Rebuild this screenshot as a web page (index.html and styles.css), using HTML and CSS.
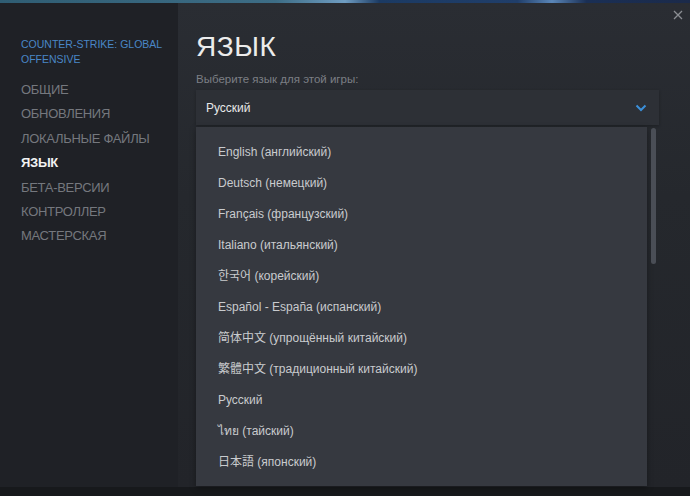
FILE: index.html
```html
<!DOCTYPE html>
<html lang="ru">
<head>
<meta charset="utf-8">
<title>Свойства — Язык</title>
<link rel="stylesheet" href="styles.css">
</head>
<body>
<div class="topline"></div>
<div class="window">
  <aside class="sidebar">
    <div class="game-title">COUNTER-STRIKE: GLOBAL OFFENSIVE</div>
    <nav class="menu">
      <div class="menu-item">ОБЩИЕ</div>
      <div class="menu-item">ОБНОВЛЕНИЯ</div>
      <div class="menu-item">ЛОКАЛЬНЫЕ ФАЙЛЫ</div>
      <div class="menu-item active">ЯЗЫК</div>
      <div class="menu-item">БЕТА-ВЕРСИИ</div>
      <div class="menu-item">КОНТРОЛЛЕР</div>
      <div class="menu-item">МАСТЕРСКАЯ</div>
    </nav>
  </aside>
  <main class="main">
    <div class="close">
      <svg width="10" height="10" viewBox="0 0 10 10"><path d="M1 1 L9 9 M9 1 L1 9" stroke="#8b8e93" stroke-width="1.3" fill="none"/></svg>
    </div>
    <h1 class="title">ЯЗЫК</h1>
    <div class="subtitle">Выберите язык для этой игры:</div>
    <div class="select">
      <span class="select-value">Русский</span>
      <svg class="chevron" width="12" height="8" viewBox="0 0 12 8"><path d="M1.5 1.5 L6 6 L10.5 1.5" stroke="#3b8fd9" stroke-width="2" fill="none"/></svg>
    </div>
    <div class="dropdown">
      <div class="list">
        <div class="option">English (английский)</div>
        <div class="option">Deutsch (немецкий)</div>
        <div class="option">Français (французский)</div>
        <div class="option">Italiano (итальянский)</div>
        <div class="option">한국어 (корейский)</div>
        <div class="option">Español - España (испанский)</div>
        <div class="option">简体中文 (упрощённый китайский)</div>
        <div class="option">繁體中文 (традиционный китайский)</div>
        <div class="option">Русский</div>
        <div class="option">ไทย (тайский)</div>
        <div class="option">日本語 (японский)</div>
      </div>
      <div class="scrollbar"><div class="thumb"></div></div>
    </div>
  </main>
</div>
<div class="bottomline"></div>
</body>
</html>
```

FILE: styles.css
```css
html, body {
  margin: 0;
  padding: 0;
}
body {
  width: 690px;
  height: 496px;
  overflow: hidden;
  background: #15171a;
  font-family: "Liberation Sans", Arial, "Noto Sans CJK KR", "Noto Sans CJK SC", sans-serif;
}
.topline {
  height: 3px;
  background: linear-gradient(90deg, #2f5d73 0%, #3d6d86 40%, #6f9dc2 50%, #1b3a63 55%, #203e6a 75%, #5a86b8 80%, #1a2f55 85%, #1b2a4a 100%);
}
.window {
  display: flex;
  height: 484px;
}
.sidebar {
  width: 178px;
  flex: none;
  background: #1f2126;
  padding: 34px 0 0 21px;
  box-sizing: border-box;
}
.game-title {
  color: #4a87c6;
  font-size: 10.5px;
  line-height: 15px;
}
.menu {
  margin-top: 11px;
  display: flex;
  flex-direction: column;
}
.menu-item {
  color: #75787e;
  font-size: 13px;
  letter-spacing: -0.3px;
  line-height: 24.4px;
  height: 24.4px;
}
.menu-item.active {
  color: #f2f2f2;
  font-weight: bold;
}
.main {
  flex: 1;
  position: relative;
  background: linear-gradient(180deg, #2a2d33 0%, #25282d 40%, #222429 100%);
  padding: 28px 31px 0 18px;
  box-sizing: border-box;
  display: flex;
  flex-direction: column;
}
.close {
  position: absolute;
  right: 7px;
  top: 7px;
  width: 10px;
  height: 10px;
}
.close svg { display: block; }
.title {
  margin: 0;
  font-weight: normal;
  font-size: 28px;
  line-height: 32px;
  color: #ececec;
  letter-spacing: 0.5px;
}
.subtitle {
  margin-top: 9px;
  color: #7c7f85;
  font-size: 11.5px;
  line-height: 14px;
}
.select {
  margin-top: 4px;
  height: 35px;
  background: #2d3036;
  display: flex;
  align-items: center;
  justify-content: space-between;
  padding: 0 12px 0 10px;
  box-shadow: 0 1px 3px rgba(0,0,0,0.25);
}
.select-value {
  color: #e8e8e8;
  font-size: 12px;
}
.chevron { display: block; }
.dropdown {
  margin-top: 2px;
  display: flex;
  gap: 4px;
  height: 359px;
}
.list {
  width: 451px;
  background: #363940;
  padding: 10px 0 0 22px;
  box-sizing: border-box;
  box-shadow: 0 2px 6px rgba(0,0,0,0.35);
}
.option {
  height: 31px;
  line-height: 31px;
  color: #c9cbce;
  font-size: 12px;
}
.scrollbar {
  width: 5px;
  padding-top: 1px;
}
.thumb {
  height: 136px;
  width: 5px;
  border-radius: 3px;
  background: #4a4e56;
}
.bottomline {
  height: 9px;
  background: #17191c;
}
```
